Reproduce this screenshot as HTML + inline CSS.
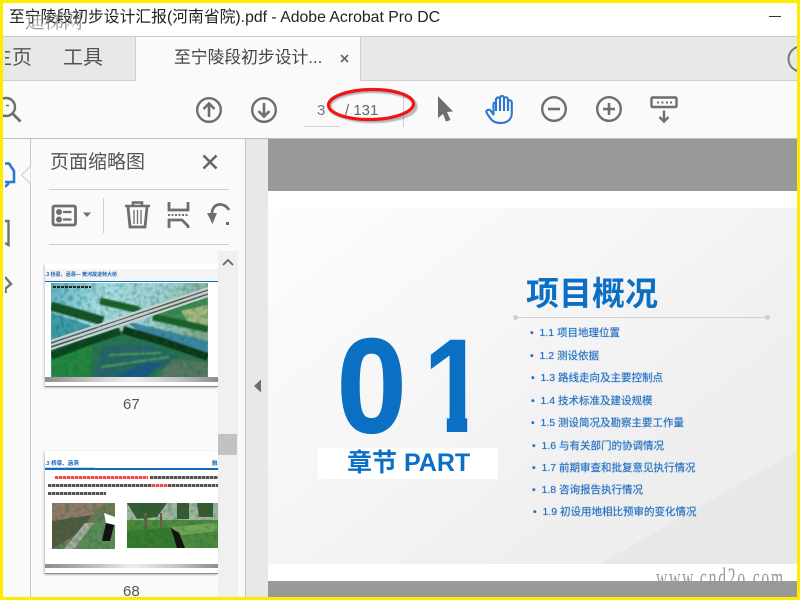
<!DOCTYPE html>
<html><head><meta charset="utf-8">
<style>
html,body{margin:0;padding:0;width:800px;height:600px;overflow:hidden;background:#fff}
*{box-sizing:border-box}
body{position:relative;font-family:"Liberation Sans","Noto Sans CJK SC",sans-serif}
.a{position:absolute}
.t{position:absolute;white-space:nowrap;line-height:1}
.li{position:absolute;white-space:nowrap;line-height:1;font-size:10.5px;color:#1f6fc0;text-shadow:0 0 1px rgba(30,110,190,.55);font-family:"Liberation Sans","Noto Sans CJK SC",sans-serif}
svg{position:absolute;overflow:visible}
</style></head><body>

<svg width="0" height="0" style="left:0;top:0"><defs>
<filter id="n" x="0" y="0" width="100%" height="100%"><feTurbulence type="fractalNoise" baseFrequency=".22" numOctaves="2" seed="4"/><feColorMatrix values="0 0 0 0 0  0 0 0 0 .14  0 0 0 0 .06  2.4 0 0 0 -1"/></filter>
<filter id="bl" x="-10%" y="-30%" width="120%" height="160%"><feGaussianBlur stdDeviation=".9"/></filter>
<filter id="s1" x="-5%" y="-5%" width="110%" height="110%"><feGaussianBlur stdDeviation=".8"/></filter>
</defs></svg>

<!-- title bar -->
<div class="a" style="left:0;top:0;width:800px;height:37px;background:#fff"></div>
<div class="t" style="left:9px;top:10px;font-size:15.800px;color:#222">至宁陵段初步设计汇报(河南省院).pdf - Adobe Acrobat Pro DC</div>
<div class="t" style="left:25px;top:10px;font-size:20px;color:#777;opacity:.75;letter-spacing:-1px;font-family:'Noto Serif CJK SC',serif">迪梯网</div>
<div class="a" style="left:769px;top:16px;width:12px;height:1px;background:#333"></div>
<div class="a" style="left:0;top:36px;width:800px;height:1px;background:#c8c8c8"></div>

<!-- tabs -->
<div class="a" style="left:0;top:37px;width:800px;height:44px;background:#e8e8e8"></div>
<div class="a" style="left:0;top:80px;width:800px;height:1px;background:#cfcfcf"></div>
<div class="a" style="left:135px;top:37px;width:226px;height:44px;background:#fafafa;border-left:1px solid #cfcfcf;border-right:1px solid #cfcfcf"></div>
<div class="t" style="left:-8px;top:48px;font-size:20px;color:#555">主页</div>
<div class="t" style="left:63px;top:48px;font-size:20px;color:#555">工具</div>
<div class="t" style="left:174px;top:50px;font-size:16.800px;color:#444">至宁陵段初步设计...</div>
<svg style="left:340px;top:54px" width="10" height="10" viewBox="0 0 10 10"><path d="M1 1L8 8M8 1L1 8" stroke="#666" stroke-width="1.700" fill="none"/></svg>
<svg style="left:786px;top:46px" width="14" height="26" viewBox="0 0 14 26"><circle cx="15" cy="13" r="12.500" fill="none" stroke="#777" stroke-width="2"/></svg>

<!-- toolbar -->
<div class="a" style="left:0;top:81px;width:800px;height:58px;background:#fafafa"></div>
<div class="a" style="left:0;top:138px;width:800px;height:1px;background:#bdbdbd"></div>
<svg style="left:0;top:95px" width="24" height="30" viewBox="0 0 24 30"><circle cx="6" cy="12" r="9" fill="none" stroke="#6e6e6e" stroke-width="2.400"/><path d="M12.500 18.500L20.500 26.500" stroke="#6e6e6e" stroke-width="2.800" fill="none"/><path d="M6 10.500h3" stroke="#6e6e6e" stroke-width="1.500"/></svg>
<svg style="left:195px;top:96px" width="28" height="28" viewBox="0 0 28 28"><circle cx="14" cy="14" r="11.800" fill="none" stroke="#6e6e6e" stroke-width="2.400"/><path d="M14 21V8M8.500 13L14 7.500L19.500 13" fill="none" stroke="#6e6e6e" stroke-width="2.600"/></svg>
<svg style="left:250px;top:96px" width="28" height="28" viewBox="0 0 28 28"><circle cx="14" cy="14" r="11.800" fill="none" stroke="#6e6e6e" stroke-width="2.400"/><path d="M14 7V20M8.500 15L14 20.500L19.500 15" fill="none" stroke="#6e6e6e" stroke-width="2.600"/></svg>
<div class="t" style="left:317px;top:103px;font-size:15px;color:#777">3</div>
<div class="a" style="left:304px;top:126px;width:36px;height:1px;background:#d2d2d2"></div>
<div class="t" style="left:345px;top:103px;font-size:15px;color:#666">/ 131</div>
<div class="a" style="left:403px;top:95px;width:1px;height:32px;background:#cfcfcf"></div>
<svg style="left:320px;top:80px" width="110" height="50" viewBox="0 0 110 50">
<ellipse cx="53" cy="26.500" rx="43" ry="15" fill="none" stroke="#555" stroke-width="3" opacity=".45" filter="url(#bl)"/>
<ellipse cx="51" cy="24.500" rx="42.500" ry="15" fill="none" stroke="#f01414" stroke-width="3.200" transform="rotate(-1 51 24.500)"/>
</svg>
<svg style="left:436px;top:94px" width="20" height="30" viewBox="0 0 20 30"><path d="M2 2L17 17.500L11 18L14.500 26L10 27.500L7 20L2 24Z" fill="#6e6e6e"/></svg>
<svg style="left:485px;top:95px" width="28" height="29" viewBox="0 0 28 29"><path d="M8.500 19.500L5.500 15.500C4 13.800 0.800 15 1.500 17.500C3.200 20.500 5.500 24 8 26C10 27.500 13 28 16 28C22 28 26.800 24.500 26.800 18V7.500C26.800 4.500 23 4.500 23 7.500V4.500C23 1.500 19 1.500 19 4.500V3C19 0.200 15 0.200 15 3V4.500C15 1.800 11 1.800 11 4.500V9.500C11 7 8.500 7 8.500 9.500V19.500ZM11 8V16M15 4V16M19 4V16M23 7V16" fill="none" stroke="#2a78d0" stroke-width="2.100" stroke-linejoin="round"/></svg>
<svg style="left:540px;top:95px" width="28" height="28" viewBox="0 0 28 28"><circle cx="14" cy="14" r="11.800" fill="none" stroke="#6e6e6e" stroke-width="2.400"/><path d="M8 14H20" stroke="#6e6e6e" stroke-width="2.600"/></svg>
<svg style="left:595px;top:95px" width="28" height="28" viewBox="0 0 28 28"><circle cx="14" cy="14" r="11.800" fill="none" stroke="#6e6e6e" stroke-width="2.400"/><path d="M8 14H20M14 8V20" stroke="#6e6e6e" stroke-width="2.600"/></svg>
<svg style="left:650px;top:96px" width="28" height="28" viewBox="0 0 28 28"><rect x="1.500" y="1.500" width="25" height="9.500" rx="1" fill="none" stroke="#6e6e6e" stroke-width="2.400"/><path d="M7 6.500h2M11.500 6.500h2M16 6.500h2M20 6.500h2" stroke="#6e6e6e" stroke-width="2"/><path d="M14 14.500V25M9.500 21L14 25.500L18.500 21" fill="none" stroke="#6e6e6e" stroke-width="2.400"/></svg>

<!-- left nav -->
<div class="a" style="left:0;top:139px;width:31px;height:461px;background:#fafafa"></div>
<div class="a" style="left:30px;top:139px;width:1px;height:461px;background:#c8c8c8"></div>
<svg style="left:21px;top:164px" width="11" height="22" viewBox="0 0 11 22"><path d="M9.500 2.500L0.500 11L9.500 20" fill="#fafafa" stroke="#c8c8c8"/></svg>
<svg style="left:0;top:160px" width="16" height="30" viewBox="0 0 16 30"><path d="M5 3.500H9L14 11V22H5" fill="none" stroke="#2a78d0" stroke-width="2.600"/><path d="M5 27L9 23" fill="none" stroke="#2a78d0" stroke-width="2.400"/></svg>
<svg style="left:0;top:218px" width="12" height="30" viewBox="0 0 12 30"><path d="M5 3H8.500V27L5 25" fill="none" stroke="#707070" stroke-width="2.400"/></svg>
<svg style="left:0;top:274px" width="14" height="26" viewBox="0 0 14 26"><path d="M5 3L11 10L5 15L6 19" fill="none" stroke="#707070" stroke-width="2.400"/></svg>
<div class="a" style="left:3px;top:139px;width:2px;height:458px;background:#fafafa"></div>

<!-- panel -->
<div class="a" style="left:31px;top:139px;width:214px;height:461px;background:#fafafa"></div>
<div class="a" style="left:245px;top:139px;width:1px;height:461px;background:#c4c4c4"></div>
<div class="t" style="left:50px;top:153px;font-size:19px;color:#555">页面缩略图</div>
<svg style="left:202px;top:154px" width="16" height="16" viewBox="0 0 16 16"><path d="M1.500 1.500L14.500 14.500M14.500 1.500L1.500 14.500" stroke="#666" stroke-width="2.600"/></svg>
<div class="a" style="left:49px;top:189px;width:180px;height:1px;background:#ccc"></div>
<div class="a" style="left:49px;top:244px;width:180px;height:1px;background:#ccc"></div>
<div class="a" style="left:103px;top:198px;width:1px;height:35px;background:#d0d0d0"></div>
<svg style="left:51px;top:204px" width="26" height="23" viewBox="0 0 26 23"><rect x="2" y="2" width="22.500" height="19" rx="1.500" fill="none" stroke="#6e6e6e" stroke-width="2.800"/><circle cx="8" cy="8" r="3" fill="#6e6e6e"/><circle cx="8" cy="15.500" r="3" fill="#6e6e6e"/><path d="M12 8h8.500M12 15.500h8.500" stroke="#6e6e6e" stroke-width="2.200"/></svg>
<svg style="left:82px;top:212px" width="10" height="6" viewBox="0 0 10 6"><path d="M1 0.500H9L5 5Z" fill="#6e6e6e"/></svg>
<svg style="left:124px;top:200px" width="28" height="30" viewBox="0 0 28 30"><path d="M1 6H26M9 6V2.500H18V6" fill="none" stroke="#6e6e6e" stroke-width="2.600"/><path d="M4 7L6 27H21L23 7" fill="none" stroke="#6e6e6e" stroke-width="2.800"/><path d="M10 10V24M13.500 10V24M17 10V24" stroke="#6e6e6e" stroke-width="1.300"/></svg>
<svg style="left:167px;top:201px" width="23" height="29" viewBox="0 0 23 29"><path d="M2 1V9H21V1" fill="none" stroke="#6e6e6e" stroke-width="2.800"/><path d="M1 14H22" stroke="#6e6e6e" stroke-width="2" stroke-dasharray="2 1.500"/><path d="M2 27V19H15L21 25V27" fill="none" stroke="#6e6e6e" stroke-width="2.800"/></svg>
<svg style="left:207px;top:202px" width="22" height="26" viewBox="0 0 22 26"><path d="M5 12C5 5 9 2.500 13 2.500C18 2.500 21 6 22 8" fill="none" stroke="#6e6e6e" stroke-width="2.800"/><path d="M0 11H10L5.500 22Z" fill="#6e6e6e"/><rect x="19" y="20" width="3" height="3" fill="#6e6e6e"/></svg>

<!-- scrollbar -->
<div class="a" style="left:218px;top:251px;width:20px;height:349px;background:#f0f0f0"></div>
<svg style="left:222px;top:258px" width="12" height="8" viewBox="0 0 12 8"><path d="M1 7L6 2L11 7" fill="none" stroke="#666" stroke-width="1.800"/></svg>
<div class="a" style="left:218px;top:434px;width:19px;height:21px;background:#c2c2c2"></div>

<!-- thumb 1 -->
<div class="a" style="left:45px;top:264px;width:173px;height:123px;background:#fff;box-shadow:-1px 1px 2px rgba(0,0,0,.22);overflow:hidden">
  <div class="a" style="left:0;top:5px;width:173px;height:12px;background:#f4f4f4"></div>
  <div class="t" style="left:0;top:9px;font-size:5px;font-weight:bold;color:#1a63b8">.3 桥梁、涵洞— 黄河故道特大桥</div>
  <div class="a" style="left:0;top:17px;width:173px;height:1px;background:#0f6cbd"></div>
  <svg style="left:6px;top:19px;overflow:hidden" width="157" height="95" viewBox="0 0 157 95">
    <defs><linearGradient id="w1" x1="0" y1="0" x2="1" y2=".3"><stop offset="0" stop-color="#5fb0c4"/><stop offset=".35" stop-color="#a8dbe3"/><stop offset=".7" stop-color="#9fcfd0"/><stop offset="1" stop-color="#7fa88a"/></linearGradient></defs>
    <rect width="157" height="95" fill="url(#w1)"/>
    <g filter="url(#s1)">
    <path d="M0 30L50 46L0 60Z" fill="#3f9aa8"/>
    <path d="M49 17L89 25L102 33L157 47V30L157 12L130 15L90 30Z" fill="#3e8a52"/>
    <path d="M130 28L157 22V44L137 38Z" fill="#a9b880"/>
    <path d="M75 38L157 58V75L100 58Z" fill="#3f86a2"/>
    <path d="M0 60L72 48L157 73V95H0Z" fill="#2a7250"/>
    <path d="M52 62L100 62L130 75L90 95L42 95Z" fill="#2a6469"/>
    <path d="M58 72L110 70M50 84L118 74" stroke="#4d9a55" stroke-width="2" fill="none"/>
    <path d="M0 70L42 60L38 95H0Z" fill="#26863e"/>
    <path d="M62 94L96 80L112 80L96 94Z" fill="#1c5688"/>
    <path d="M122 76L157 80V95H105Z" fill="#5a7660"/>
    <path d="M0 23Q25 30 52 38" stroke="#124f22" stroke-width="9" fill="none"/>
    <path d="M49 18L88 27M102 34L157 46" stroke="#1d5f27" stroke-width="7" fill="none"/>
    <path d="M0 73L34 60L69 48" stroke="#0f431c" stroke-width="8" fill="none"/>
    <path d="M72 47L110 58L157 74" stroke="#0c3616" stroke-width="8" fill="none"/>
    </g>
    <rect width="157" height="95" filter="url(#n)" opacity=".38"/>
    <path d="M0 58L157 5M0 62L157 9M0 66L157 13" fill="none" stroke="#c9cdd0" stroke-width="2.200"/>
    <path d="M0 60L157 7M0 64L157 11" fill="none" stroke="#555" stroke-width="1"/>
    <path d="M2 4h38" stroke="#222" stroke-width="2" stroke-dasharray="3 1"/>
  </svg>
  <div class="a" style="left:0;top:113px;width:173px;height:5px;background:linear-gradient(90deg,#8d8d8d,#d8d8d8 35%,#eee 50%,#c8c8c8 75%,#8d8d8d)"></div>
  <div class="a" style="left:0;top:122px;width:173px;height:1px;background:#7a8d8d"></div>
</div>
<div class="t" style="left:123px;top:397px;font-size:15px;color:#555">67</div>

<!-- thumb 2 -->
<div class="a" style="left:45px;top:451px;width:173px;height:123px;background:#fff;box-shadow:-1px 1px 2px rgba(0,0,0,.25);overflow:hidden">
  <div class="t" style="left:0;top:11px;font-size:5.500px;font-weight:bold;color:#1a63b8">.3 桥梁、涵洞</div>
  <div class="t" style="left:167px;top:11px;font-size:5.500px;font-weight:bold;color:#1a63b8">融</div>
  <div class="a" style="left:0;top:16px;width:50px;height:1px;background:#c5d5e8"></div>
  <div class="a" style="left:0;top:17px;width:173px;height:1.500px;background:#0f6cbd"></div>
  <div style="opacity:.78">
  <div class="a" style="left:10px;top:25px;width:93px;height:3px;background:repeating-linear-gradient(90deg,#e81818 0 3px,#f6a0a0 3px 4px)"></div>
  <div class="a" style="left:105px;top:25px;width:68px;height:3px;background:repeating-linear-gradient(90deg,#222 0 3px,#999 3px 4px)"></div>
  <div class="a" style="left:3px;top:33px;width:104px;height:3px;background:repeating-linear-gradient(90deg,#222 0 3px,#999 3px 4px)"></div>
  <div class="a" style="left:107px;top:33px;width:16px;height:3px;background:repeating-linear-gradient(90deg,#e81818 0 3px,#f6a0a0 3px 4px)"></div>
  <div class="a" style="left:123px;top:33px;width:50px;height:3px;background:repeating-linear-gradient(90deg,#222 0 3px,#999 3px 4px)"></div>
  <div class="a" style="left:3px;top:41px;width:58px;height:3px;background:repeating-linear-gradient(90deg,#222 0 3px,#999 3px 4px)"></div>
  </div>
  <svg style="left:7px;top:52px" width="63" height="46" viewBox="0 0 63 46"><rect width="63" height="46" fill="#6f7a55"/><path d="M0 0H52L40 12L0 18Z" fill="#937868"/><path d="M0 18L40 12L30 28L0 46Z" fill="#55593f"/><path d="M33 20L42 20L22 46H12Z" fill="#a9aca0"/><path d="M42 20L63 15V46H22Z" fill="#5e8a55"/><rect width="63" height="46" filter="url(#n)" opacity=".4"/><path d="M52 10L63 14V22L54 20Z" fill="#fff"/><path d="M54 20L62 22L58 38L50 38Z" fill="#111"/></svg>
  <svg style="left:82px;top:52px" width="91" height="45" viewBox="0 0 91 45"><rect width="91" height="45" fill="#4f8a3c"/><rect width="91" height="17" fill="#a4b4a0"/><path d="M0 0H40L30 14L10 16ZM50 0H62V16H50ZM70 0H86V14H72Z" fill="#3a5a30"/><path d="M17 10h3V34h-3ZM33 10h2V28h-2Z" fill="#6d5d45"/><path d="M40 24L90 20V28L55 32Z" fill="#77a555"/><path d="M0 28L45 24L50 45H0Z" fill="#3a7a2c"/><rect width="91" height="45" filter="url(#n)" opacity=".4"/><path d="M44 25L52 30L58 45H50Z" fill="#111"/></svg>
  <div class="a" style="left:0;top:113px;width:173px;height:4px;background:linear-gradient(90deg,#8d8d8d,#c0c0c0 30%,#eee 50%,#c8c8c8 75%,#8d8d8d)"></div>
  <div class="a" style="left:0;top:122px;width:173px;height:1px;background:#7a8d8d"></div>
</div>
<div class="t" style="left:123px;top:584px;font-size:15px;color:#555">68</div>

<!-- gutter -->
<div class="a" style="left:246px;top:139px;width:22px;height:461px;background:#e8e8e8"></div>
<svg style="left:253px;top:379px" width="9" height="14" viewBox="0 0 9 14"><path d="M8 0.500V13.500L1 7Z" fill="#6e6e6e"/></svg>

<!-- page -->
<div class="a" style="left:268px;top:139px;width:532px;height:52px;background:#999"></div>
<div class="a" style="left:268px;top:191px;width:532px;height:390px;background:#fff"></div>
<div class="a" style="left:268px;top:208px;width:532px;height:356px;background:linear-gradient(142deg,#fdfdfd 0%,#f6f6f7 38%,#efeff0 70%,#ececec 100%)"></div>
<svg style="left:268px;top:208px" width="532" height="356" viewBox="0 0 532 356"><path d="M332 356L532 241V356Z" fill="#e8e8e8"/></svg>
<div class="a" style="left:268px;top:581px;width:532px;height:19px;background:#999"></div>

<div class="t" style="left:337px;top:320px;font-size:134px;font-weight:bold;color:#0b70c4;-webkit-text-stroke:1.500px #0b70c4;transform:scaleX(.93);transform-origin:0 0">0</div>
<div class="t" style="left:423px;top:320px;font-size:134px;font-weight:bold;color:#0b70c4;transform:scaleX(.85);transform-origin:0 0;clip-path:polygon(0 0,74px 0,74px 96px,52px 96px,52px 114px,28px 114px,28px 96px,0 96px)">1</div>
<div class="a" style="left:318px;top:448px;width:180px;height:31px;background:#fff"></div>
<div class="t" style="left:347px;top:451px;font-size:25px;font-weight:bold;color:#0b70c4">章节 PART</div>

<div class="t" style="left:526px;top:275px;font-size:33px;font-weight:bold;color:#0b70c4;font-family:'Noto Sans CJK SC',sans-serif">项目概况</div>
<div class="a" style="left:515px;top:316.500px;width:252px;height:1.500px;background:#d2d2d2"></div>
<div class="a" style="left:513px;top:315px;width:5px;height:5px;border-radius:50%;background:#d0d0d0"></div>
<div class="a" style="left:765px;top:315px;width:5px;height:5px;border-radius:50%;background:#d0d0d0"></div>

<div class="li" style="left:530px;top:328px">•&nbsp;&nbsp;1.1 项目地理位置</div>
<div class="li" style="left:530px;top:351px">•&nbsp;&nbsp;1.2 测设依据</div>
<div class="li" style="left:531px;top:373px">•&nbsp;&nbsp;1.3 路线走向及主要控制点</div>
<div class="li" style="left:531px;top:396px">•&nbsp;&nbsp;1.4 技术标准及建设规模</div>
<div class="li" style="left:531px;top:418px">•&nbsp;&nbsp;1.5 测设简况及勘察主要工作量</div>
<div class="li" style="left:532px;top:441px">•&nbsp;&nbsp;1.6 与有关部门的协调情况</div>
<div class="li" style="left:532px;top:463px">•&nbsp;&nbsp;1.7 前期审查和批复意见执行情况</div>
<div class="li" style="left:532px;top:485px">•&nbsp;&nbsp;1.8 咨询报告执行情况</div>
<div class="li" style="left:533px;top:507px">•&nbsp;&nbsp;1.9 初设用地相比预审的变化情况</div>

<!-- watermark -->
<div class="a" style="left:650px;top:560px;width:150px;height:21px;overflow:hidden">
<div class="t" style="left:6px;top:5px;font-size:26px;color:#999;letter-spacing:3px;transform:scaleX(.6);transform-origin:0 0;font-family:'Liberation Serif',serif">www.cnd2o.com</div>
</div>

<!-- left strips -->
<div class="a" style="left:3px;top:37px;width:2px;height:43px;background:#e8e8e8"></div>

<!-- yellow frame -->
<div class="a" style="left:0;top:0;width:800px;height:3px;background:#ffea00"></div>
<div class="a" style="left:0;top:597px;width:800px;height:3px;background:#ffea00"></div>
<div class="a" style="left:0;top:0;width:3px;height:600px;background:#ffea00"></div>
<div class="a" style="left:797px;top:0;width:3px;height:600px;background:#ffea00"></div>
</body></html>
